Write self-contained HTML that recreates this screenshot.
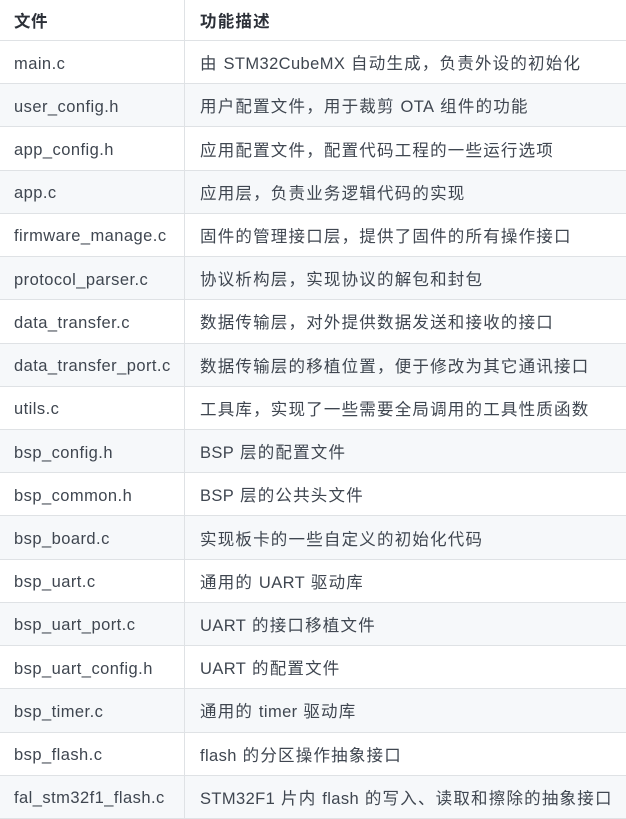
<!DOCTYPE html>
<html><head><meta charset="utf-8"><style>
body{margin:0;width:626px;height:819px;overflow:hidden;background:#fff;font-family:"Liberation Sans","Noto Sans CJK SC",sans-serif;font-size:16.5px;color:#3f4650}
.r{display:flex;height:43.22px;box-sizing:border-box;border-bottom:1px solid #dfe2e5;align-items:stretch}
.r:nth-child(odd){background:#f6f8fa}
.h{height:41px;font-weight:bold;color:#2c3038;background:#fff!important}
.a{width:185px;flex:none;box-sizing:border-box;padding-left:14px;padding-top:4px;display:flex;align-items:center;border-right:1px solid #dfe2e5;letter-spacing:0.45px}
.h .a{padding-top:0}
.b{padding-left:15px;white-space:nowrap;display:flex;align-items:center;letter-spacing:1.2px}
i{font-style:normal;letter-spacing:0.4px}
</style></head><body><div>
<div class="r h"><div class="a">文件</div><div class="b"><span>功能描述</span></div></div>
<div class="r"><div class="a">main.c</div><div class="b"><span>由 <i>STM32CubeMX</i> 自动生成，负责外设的初始化</span></div></div>
<div class="r"><div class="a">user_config.h</div><div class="b"><span>用户配置文件，用于裁剪 <i>OTA</i> 组件的功能</span></div></div>
<div class="r"><div class="a">app_config.h</div><div class="b"><span>应用配置文件，配置代码工程的一些运行选项</span></div></div>
<div class="r"><div class="a">app.c</div><div class="b"><span>应用层，负责业务逻辑代码的实现</span></div></div>
<div class="r"><div class="a">firmware_manage.c</div><div class="b"><span>固件的管理接口层，提供了固件的所有操作接口</span></div></div>
<div class="r"><div class="a">protocol_parser.c</div><div class="b"><span>协议析构层，实现协议的解包和封包</span></div></div>
<div class="r"><div class="a">data_transfer.c</div><div class="b"><span>数据传输层，对外提供数据发送和接收的接口</span></div></div>
<div class="r"><div class="a">data_transfer_port.c</div><div class="b"><span>数据传输层的移植位置，便于修改为其它通讯接口</span></div></div>
<div class="r"><div class="a">utils.c</div><div class="b"><span>工具库，实现了一些需要全局调用的工具性质函数</span></div></div>
<div class="r"><div class="a">bsp_config.h</div><div class="b"><span><i>BSP</i> 层的配置文件</span></div></div>
<div class="r"><div class="a">bsp_common.h</div><div class="b"><span><i>BSP</i> 层的公共头文件</span></div></div>
<div class="r"><div class="a">bsp_board.c</div><div class="b"><span>实现板卡的一些自定义的初始化代码</span></div></div>
<div class="r"><div class="a">bsp_uart.c</div><div class="b"><span>通用的 <i>UART</i> 驱动库</span></div></div>
<div class="r"><div class="a">bsp_uart_port.c</div><div class="b"><span><i>UART</i> 的接口移植文件</span></div></div>
<div class="r"><div class="a">bsp_uart_config.h</div><div class="b"><span><i>UART</i> 的配置文件</span></div></div>
<div class="r"><div class="a">bsp_timer.c</div><div class="b"><span>通用的 <i>timer</i> 驱动库</span></div></div>
<div class="r"><div class="a">bsp_flash.c</div><div class="b"><span><i>flash</i> 的分区操作抽象接口</span></div></div>
<div class="r"><div class="a">fal_stm32f1_flash.c</div><div class="b"><span><i>STM32F1</i> 片内 <i>flash</i> 的写入、读取和擦除的抽象接口</span></div></div>
</div></body></html>
